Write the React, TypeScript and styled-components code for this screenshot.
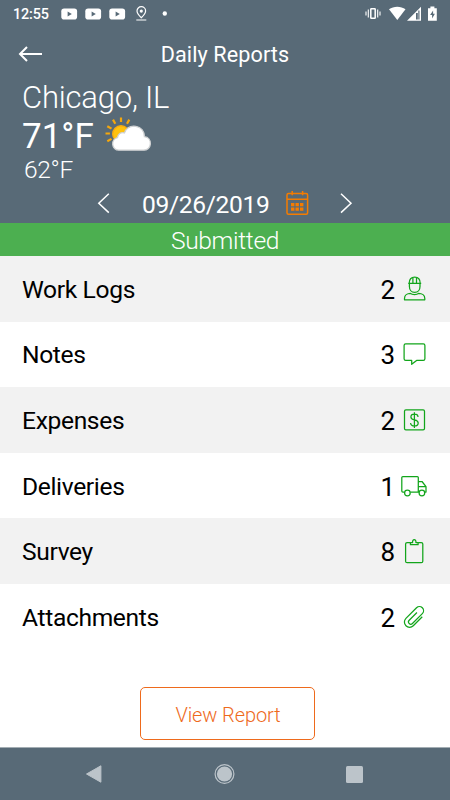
import React from 'react';
import styled, { createGlobalStyle } from 'styled-components';

const slate = '#586a77';
const green = '#12a51b';

const GlobalStyle = createGlobalStyle`
  * { box-sizing: border-box; }
  body { margin: 0; background: #fff; font-family: Roboto, sans-serif; }
  svg { display: block; flex: none; }
`;

const Screen = styled.div`
  width: 450px;
  height: 800px;
  display: flex;
  flex-direction: column;
  overflow: hidden;
  background: #fff;
`;

const Header = styled.header`
  height: 223px;
  flex: none;
  background: ${slate};
  color: #fff;
`;

const StatusBar = styled.div`
  height: 27px;
  padding: 0 12px 0 13px;
  display: flex;
  align-items: center;
`;

const Clock = styled.span`
  width: 48px;
  padding-top: 1px;
  font-size: 14.4px;
  font-weight: 500;
  line-height: 27px;
  letter-spacing: -0.15px;
`;

const StatusIcons = styled.div<{ $end?: boolean }>`
  display: flex;
  align-items: center;
  ${(p) => p.$end && 'margin-left: auto;'}
`;

const TitleBar = styled.div`
  height: 52px;
  display: grid;
  grid-template-columns: 60px 1fr 60px;
  align-items: center;
`;

const BackButton = styled.button`
  border: 0;
  padding: 1px 0 0 18px;
  background: none;
`;

const Title = styled.h1`
  margin: 3px 0 0;
  text-align: center;
  font-size: 21.6px;
  font-weight: 400;
  line-height: 28px;
  letter-spacing: 0.1px;
`;

const Weather = styled.section`
  height: 104px;
  padding: 0 22px;
`;

const City = styled.div`
  height: 37px;
  line-height: 37px;
  font-size: 31px;
  font-weight: 300;
  letter-spacing: -0.2px;
`;

const Current = styled.div`
  height: 38px;
  display: flex;
  align-items: center;
  gap: 11px;
  font-size: 35px;
  font-weight: 400;
  line-height: 38px;
`;

const Temperature = styled.span`
  padding-top: 3px;
`;

const Low = styled.div`
  height: 29px;
  padding-left: 2px;
  line-height: 31px;
  font-size: 24.5px;
  font-weight: 300;
  letter-spacing: -0.3px;
`;

const DateRow = styled.div`
  height: 40px;
  padding: 0 97px;
  display: flex;
  align-items: center;
`;

const DateText = styled.span`
  width: 128px;
  margin: 3px 16px 0 32px;
  font-size: 24.6px;
  font-weight: 400;
  line-height: 34px;
  letter-spacing: -0.35px;
  white-space: nowrap;
`;

const NextArrow = styled.div`
  margin-left: auto;
`;

const StatusBanner = styled.div`
  height: 33px;
  flex: none;
  padding-top: 1px;
  background: #4caf50;
  color: #fff;
  text-align: center;
  font-size: 24.6px;
  font-weight: 300;
  line-height: 34px;
  letter-spacing: -0.35px;
`;

const List = styled.ul`
  margin: 0;
  padding: 0;
  list-style: none;
`;

const Row = styled.li`
  height: 65.6px;
  padding: 0 21px 0 22px;
  display: flex;
  align-items: center;
  color: #000;
  &:nth-child(odd) { background: #f2f2f2; }
`;

const Label = styled.span`
  flex: 1;
  padding-top: 2px;
  font-size: 24.6px;
  font-weight: 400;
  line-height: 32px;
  letter-spacing: -0.35px;
`;

const Count = styled.span`
  padding-top: 2px;
  font-size: 26px;
  font-weight: 400;
  line-height: 32px;
`;

const RowIcon = styled.span`
  width: 34px;
  height: 30px;
`;

const Actions = styled.div`
  flex: 1;
  display: flex;
  justify-content: center;
  align-items: flex-end;
  padding: 0 0 7px 5px;
`;

const ReportButton = styled.button`
  width: 175px;
  height: 53px;
  padding: 2px 0 0 1px;
  border: 1.3px solid #ee6a1c;
  border-radius: 5px;
  background: #fff;
  color: #ee6a1c;
  font-family: inherit;
  font-size: 20px;
  font-weight: 300;
  letter-spacing: -0.1px;
`;

const NavBar = styled.nav`
  height: 53px;
  flex: none;
  padding: 0 86px 0 85px;
  display: flex;
  align-items: center;
  justify-content: space-between;
  border-top: 1px solid #a3adb3;
  background: ${slate};
`;

const Video = () => (
  <svg width="24" height="12" viewBox="0 0 24 12">
    <rect x="0.3" y="0.5" width="15.8" height="11" rx="2.8" fill="#fff" />
    <path d="M6.6 3.6v4.8l4.2-2.4z" fill={slate} />
  </svg>
);

const Sun = () => (
  <svg width="48" height="36" viewBox="0 0 48 36">
    <g stroke="#f4a70d" strokeWidth="2.2">
      <path d="M16 .5v4.6M8 2.6l2.3 4.2M24.3 2.6L22 6.7M2.3 9.2l4.2 2.4M.5 16.5h4.4M2.3 24.3l4.2-2.4" />
    </g>
    <circle cx="16" cy="17" r="8.3" fill="#ffc20e" stroke="#f7ac10" strokeWidth="1.4" />
    <path
      d="M13.7 33.2a6.4 6.4 0 0 1-1.2-12.6c.4-3.8 3.4-5.7 6.9-4.7 2-5 6.6-7.3 11.4-6.6 5.5.8 8.7 5.2 8.6 10.4 4 .5 6.3 3.5 6 7.2-.3 3.7-3 6.3-6.8 6.3z"
      fill="#fff"
      stroke="#cfd1d2"
      strokeWidth="1.3"
    />
  </svg>
);

const Calendar = () => (
  <svg width="23" height="26" viewBox="0 0 23 26" fill="none" stroke="#f57c00" strokeWidth="1.5">
    <rect x="1" y="3.5" width="20.6" height="20.8" rx="1.5" />
    <path d="M1 9.2h20.6M6.2 1v4.3M16.6 1v4.3" />
    <g fill="#f57c00" stroke="none">
      {[13, 17.5].map((y) =>
        [5, 9.5, 14].map((x) => <rect key={`${x}-${y}`} x={x} y={y} width="3.4" height="3.3" />),
      )}
    </g>
  </svg>
);

const Chevron = ({ next }: { next?: boolean }) => (
  <svg width="13" height="22" viewBox="0 0 13 22" fill="none" stroke="#fff" strokeWidth="1.5">
    <path d={next ? 'M1 1.8L11 11.2L1 20.6' : 'M11.8 1.8L1.8 11.2L11.8 20.6'} />
  </svg>
);

const shapes: Record<string, React.ReactNode> = {
  worker: (
    <>
      <path d="M9.5 25.8v-1.4c0-3 2.7-5 6-5 1.4 1.5 6.6 1.5 8 0 3.7 0 6.3 2 6.3 5v1.4z" />
      <path d="M14.4 10v2.4c0 3.4 2 6 5.3 6s5.3-2.6 5.3-6V10M13.2 9.4h13M14.2 9.2c0-3.8 2.2-6.2 5.5-6.2s5.5 2.4 5.5 6.2M17.9 3.4v5.4M21.5 3.4v5.4" />
    </>
  ),
  note: <path d="M10.7 4.9h17.6q1.6 0 1.6 1.6v13.3q0 1.6-1.6 1.6h-6.7l-4.9 3.9v-3.9h-6q-1.6 0-1.6-1.6V6.5q0-1.6 1.6-1.6z" />,
  money: (
    <>
      <rect x="9.5" y="4.9" width="20" height="20" rx="1.4" />
      <path d="M23 11.9c0-2-1.5-2.8-3.6-2.8s-3.5.9-3.5 2.8c0 4.2 7.3 1.9 7.3 6 0 2-1.7 3-3.8 3s-3.8-1-3.8-3M19.4 7.2V23" />
    </>
  ),
  truck: (
    <>
      <path d="M9.5 21H7.8q-1 0-1-1V6.6q0-1 1-1h14.5q1 0 1 1V21h-8M23.3 10.5h3.7l4 5.2V21h-1.3M24 21h-1M23.3 15.7H31" />
      <circle cx="12.4" cy="22" r="2.8" />
      <circle cx="26.9" cy="22" r="2.8" />
    </>
  ),
  clipboard: (
    <>
      <path d="M15.3 6.5h-3.2q-1.5 0-1.5 1.5v17.2q0 1.5 1.5 1.5h14.2q1.5 0 1.5-1.5V8q0-1.5-1.5-1.5h-3.2" />
      <path d="M15.4 8.7V6.5h2.2c-.6-3.8 3.9-3.8 3.3 0h2.2v2.2z" />
    </>
  ),
  clip: (
    <path
      transform="translate(19.7 15) rotate(45)"
      d="M5.2-5.5V7.2a5.2 5.2 0 0 1-10.4 0V-7.8a4.1 4.1 0 0 1 8.2 0V6.2a2.3 2.3 0 0 1-4.6 0V-4.8"
    />
  ),
};

const items = [
  { label: 'Work Logs', count: 2, icon: 'worker' },
  { label: 'Notes', count: 3, icon: 'note' },
  { label: 'Expenses', count: 2, icon: 'money' },
  { label: 'Deliveries', count: 1, icon: 'truck' },
  { label: 'Survey', count: 8, icon: 'clipboard' },
  { label: 'Attachments', count: 2, icon: 'clip' },
];

export default function App() {
  return (
    <>
      <GlobalStyle />
      <Screen>
        <Header>
          <StatusBar>
            <Clock>12:55</Clock>
            <StatusIcons>
              <Video />
              <Video />
              <Video />
              <svg width="34" height="16" viewBox="0 0 34 16">
                <path d="M8.3 11.7C5.4 9 4 7 4 5a4.3 4.3 0 0 1 8.6 0c0 2-1.4 4-4.3 6.7zM3.3 14h10" fill="none" stroke="#fff" strokeWidth="1.2" />
                <circle cx="8.3" cy="5.1" r="1.6" fill="#fff" />
                <circle cx="31.8" cy="7.5" r="2.2" fill="#fff" />
              </svg>
            </StatusIcons>
            <StatusIcons $end>
              <svg width="73" height="16" viewBox="0 0 73 16">
                <rect x="5.8" y="2.8" width="4.4" height="9.4" rx="0.5" fill="none" stroke="#fff" strokeWidth="1.5" />
                <path d="M3.3 3.5v8M1 5.5v4M12.7 3.5v8M15 5.5v4" stroke="#fff" strokeWidth="1.1" />
                <path d="M24 3.3C28.5 -.1 36 -.1 40.5 3.3L32.3 14z" fill="#fff" />
                <path d="M42 14.8L56 .8v14z" fill="#fff" />
                <path d="M51 7h1.8v6.4H51zM53.3 4.4h1.2v9h-1.2z" fill={slate} />
                <path d="M63 2.3h2.4V.5h4v1.8h2.4v12.5H63z" fill="#fff" />
                <path d="M68.1 4.4l-3 4.7h2v3.4l2.8-4.7h-1.8z" fill={slate} />
              </svg>
            </StatusIcons>
          </StatusBar>
          <TitleBar>
            <BackButton aria-label="Back">
              <svg width="26" height="18" viewBox="0 0 26 18" fill="none" stroke="#fff" strokeWidth="2">
                <path d="M9 2L2 9l7 7M2 9h22" />
              </svg>
            </BackButton>
            <Title>Daily Reports</Title>
          </TitleBar>
          <Weather>
            <City>Chicago, IL</City>
            <Current>
              <Temperature>71°F</Temperature>
              <Sun />
            </Current>
            <Low>62°F</Low>
          </Weather>
          <DateRow>
            <Chevron />
            <DateText>09/26/2019</DateText>
            <Calendar />
            <NextArrow>
              <Chevron next />
            </NextArrow>
          </DateRow>
        </Header>
        <StatusBanner>Submitted</StatusBanner>
        <List>
          {items.map((item) => (
            <Row key={item.label}>
              <Label>{item.label}</Label>
              <Count>{item.count}</Count>
              <RowIcon>
                <svg width="34" height="30" viewBox="0 0 34 30" fill="none" stroke={green} strokeWidth="1.25" strokeLinejoin="round">
                  {shapes[item.icon]}
                </svg>
              </RowIcon>
            </Row>
          ))}
        </List>
        <Actions>
          <ReportButton>View Report</ReportButton>
        </Actions>
        <NavBar>
          <svg width="17" height="20" viewBox="0 0 17 20">
            <path d="M15.9 1.8v16.4L1.5 10z" fill="#bcc4ca" stroke="#bcc4ca" strokeLinejoin="round" />
          </svg>
          <svg width="22" height="22" viewBox="0 0 22 22">
            <circle cx="11.5" cy="11" r="9.4" fill="none" stroke="#bcc4ca" strokeWidth="1.2" />
            <circle cx="11.5" cy="11" r="7.6" fill="#bcc4ca" />
          </svg>
          <svg width="19" height="19" viewBox="0 0 19 19">
            <rect x="1" y="1" width="17" height="17" rx="1.5" fill="#bcc4ca" />
          </svg>
        </NavBar>
      </Screen>
    </>
  );
}
